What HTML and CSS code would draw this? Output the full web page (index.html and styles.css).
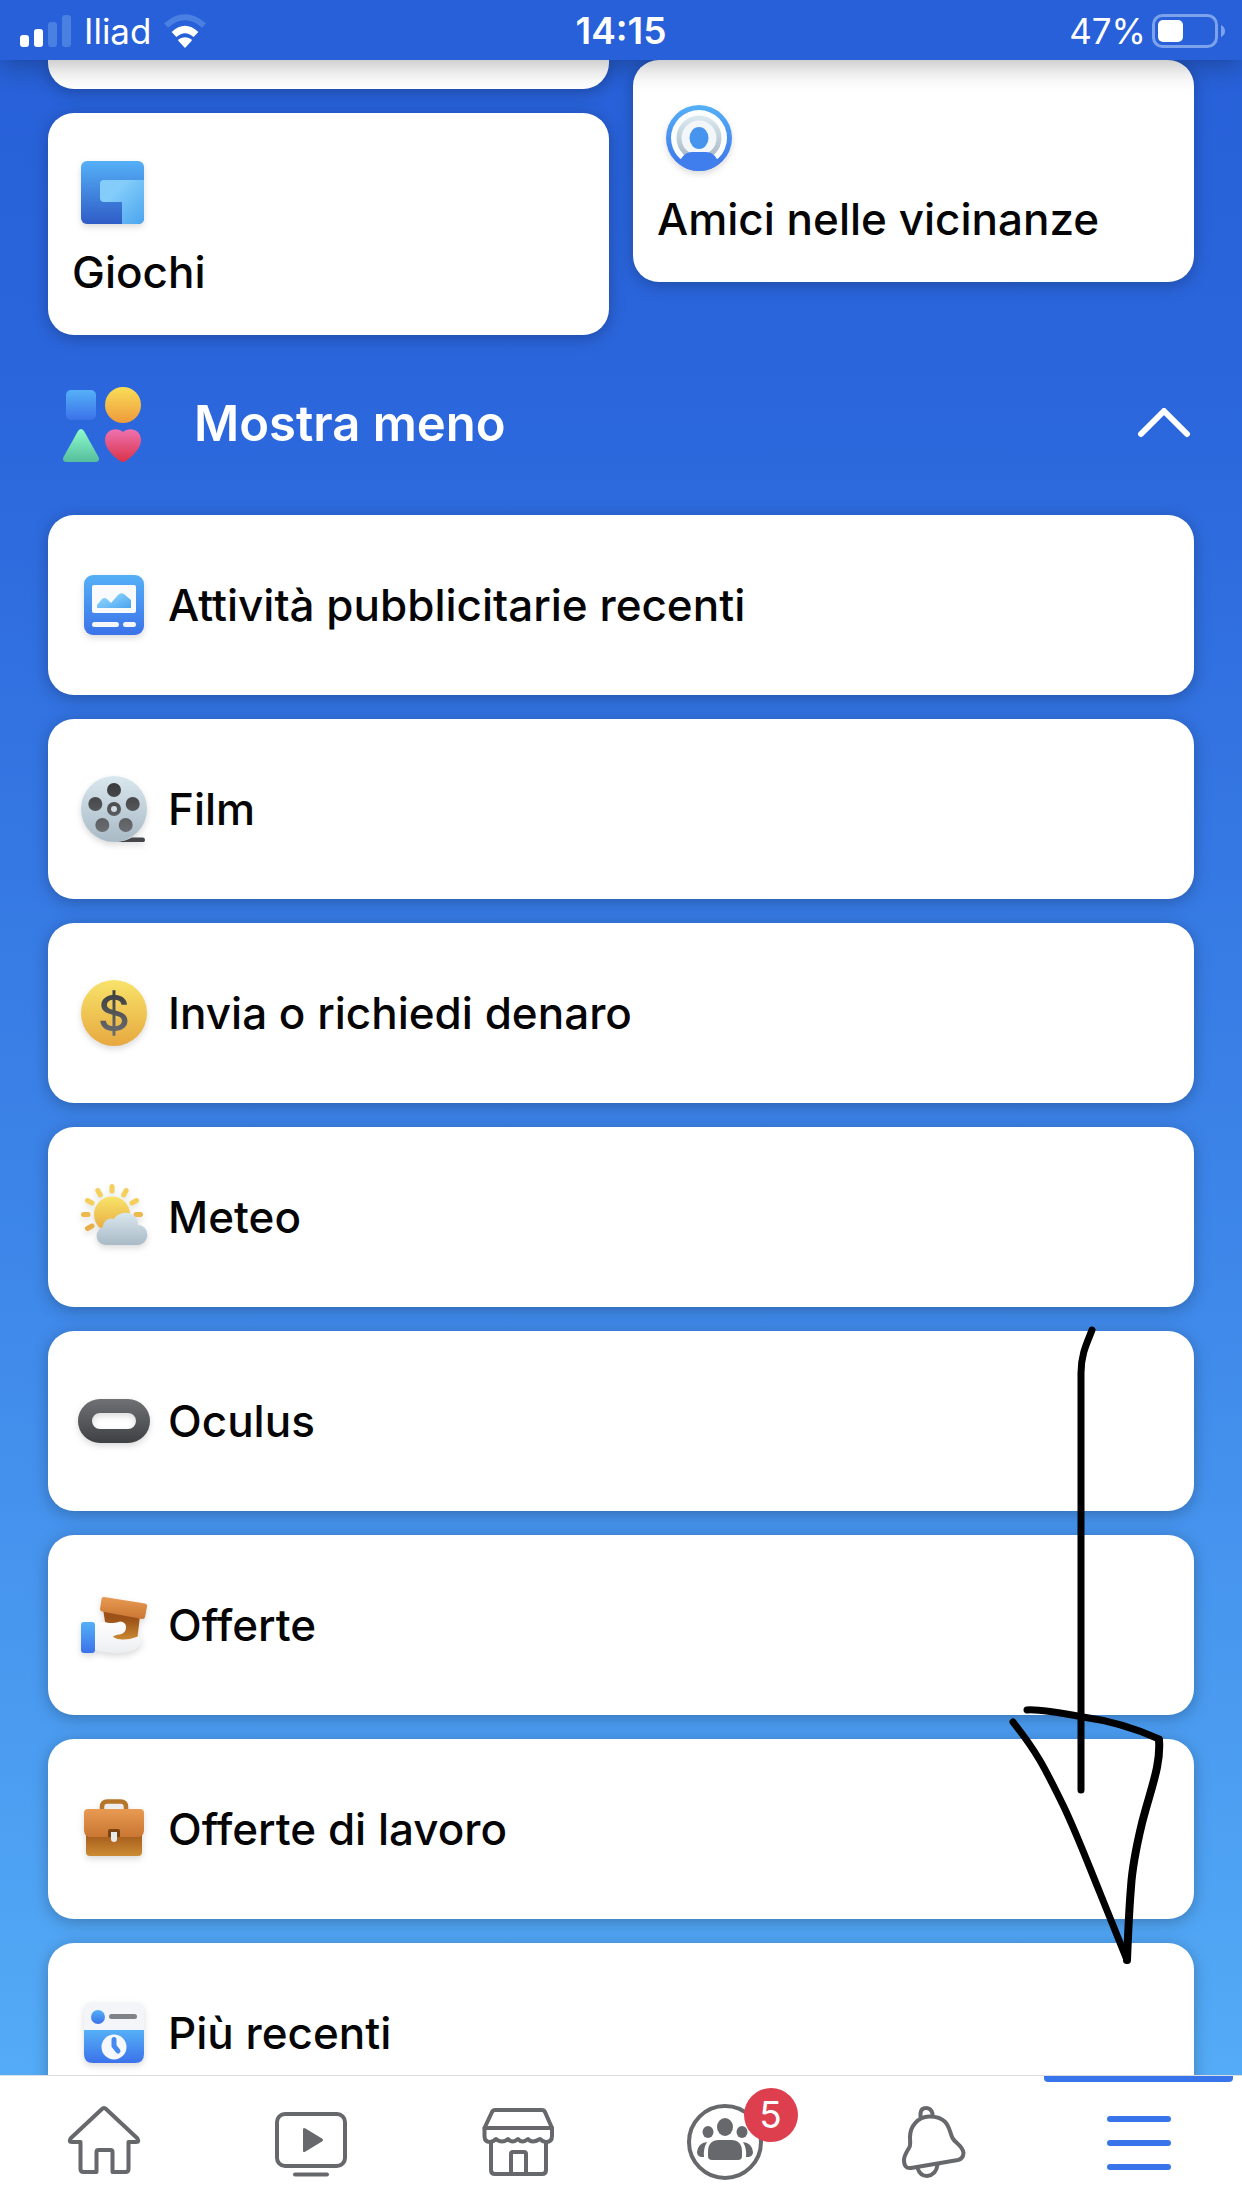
FILE: index.html
```
<!DOCTYPE html>
<html lang="it">
<head>
    <meta charset="UTF-8">
    <meta name="viewport" content="width=device-width, initial-scale=1.0">
    <title>Menu</title>
    <link rel="stylesheet" href="styles.css">
</head>
<body>
    <!-- Shared gradients -->
    <svg class="defs" aria-hidden="true">
        <defs>
            <linearGradient id="blue" x1="0" y1="0" x2="0" y2="1"><stop offset="0" stop-color="#55b0f7"/><stop offset="1" stop-color="#3b72ea"/></linearGradient>
            <linearGradient id="deep" x1="0" y1="0" x2="0" y2="1"><stop offset="0" stop-color="#55b0f7"/><stop offset="1" stop-color="#2f5cc6"/></linearGradient>
            <linearGradient id="sky" x1="0" y1="0" x2="1" y2="1"><stop offset="0.3" stop-color="#84cdfb"/><stop offset="1" stop-color="#4aa4ee"/></linearGradient>
            <linearGradient id="yellow" x1="0" y1="0" x2="0" y2="1"><stop offset="0" stop-color="#f8e36a"/><stop offset="1" stop-color="#e7a83f"/></linearGradient>
            <linearGradient id="orange" x1="0" y1="0" x2="0" y2="1"><stop offset="0" stop-color="#f9de59"/><stop offset="1" stop-color="#ee9a3a"/></linearGradient>
            <linearGradient id="green" x1="0" y1="0" x2="0" y2="1"><stop offset="0" stop-color="#8ffccb"/><stop offset="1" stop-color="#55bd9c"/></linearGradient>
            <linearGradient id="pink" x1="0" y1="0" x2="0" y2="1"><stop offset="0" stop-color="#ee72b0"/><stop offset="1" stop-color="#d93348"/></linearGradient>
            <linearGradient id="silver" x1="0" y1="0" x2="0" y2="1"><stop offset="0" stop-color="#d9e7ee"/><stop offset="1" stop-color="#a9bac6"/></linearGradient>
            <linearGradient id="white" x1="0" y1="0" x2="0" y2="1"><stop offset="0" stop-color="#ffffff"/><stop offset="1" stop-color="#eceef1"/></linearGradient>
            <linearGradient id="grey" x1="0" y1="0" x2="0" y2="1"><stop offset="0" stop-color="#6f7175"/><stop offset="1" stop-color="#3f4043"/></linearGradient>
            <linearGradient id="coal" gradientUnits="userSpaceOnUse" x1="0" y1="10" x2="0" y2="60"><stop offset="0" stop-color="#37393b"/><stop offset="1" stop-color="#6c6e71"/></linearGradient>
            <linearGradient id="tan" x1="0" y1="0" x2="0" y2="1"><stop offset="0" stop-color="#e89a52"/><stop offset="1" stop-color="#c97632"/></linearGradient>
            <linearGradient id="brown" x1="0" y1="0" x2="0" y2="1"><stop offset="0.3" stop-color="#9c5117"/><stop offset="1" stop-color="#cd8c34"/></linearGradient>
        </defs>
    </svg>

    <header class="status">
        <div class="status-left">
            <svg class="signal" viewBox="0 0 56 32" aria-hidden="true">
                <rect x="4" y="20" width="9" height="12" rx="3"/>
                <rect x="18" y="14" width="9" height="18" rx="3"/>
                <rect class="dim" x="32" y="7" width="9" height="25" rx="3"/>
                <rect class="dim" x="46" y="0" width="9" height="32" rx="3"/>
            </svg>
            <span>Iliad</span>
            <svg class="wifi" viewBox="0 0 44 34" aria-hidden="true">
                <path d="M22 34L15.5 27Q14.500 26 16 25Q22 21.500 28 25Q29.500 26 28.500 27Z"/>
                <path d="M11 20.500Q22 10.500 33 20.500" fill="none" stroke="#fff" stroke-width="7"/>
                <path class="dim-line" d="M3 11.500Q22 -5 41 11.500" fill="none" stroke-width="6"/>
            </svg>
        </div>
        <time class="clock">14:15</time>
        <div class="status-right">
            <span>47%</span>
            <svg class="battery" viewBox="0 0 74 34" aria-hidden="true">
                <rect class="battery-case" x="1.500" y="1.500" width="63" height="31" rx="9"/>
                <rect x="6" y="6" width="25" height="22" rx="5"/>
                <path class="dim-nub" d="M69 11Q73 13 73 17T69 23Z"/>
            </svg>
        </div>
    </header>

    <main class="menu">
        <div class="tiles">
            <div class="tile-column">
                <div class="tile-end"></div>
                <a class="card tile" href="#">
                    <svg class="icon" viewBox="0 0 72 72" aria-hidden="true">
                        <rect x="3" y="5" width="63" height="63" rx="6" fill="url(#deep)"/>
                        <path d="M26 24H66V62Q66 68 60 68H44V46H26Q22 46 22 42V28Q22 24 26 24Z" fill="url(#sky)"/>
                    </svg>
                    <span>Giochi</span>
                </a>
            </div>
            <div class="tile-column">
                <a class="card tile" href="#">
                    <svg class="icon" viewBox="0 0 72 72" aria-hidden="true">
                        <circle cx="36" cy="35" r="33" fill="url(#blue)"/>
                        <circle cx="36" cy="35" r="28" fill="#fcfdfe"/>
                        <circle cx="36" cy="35" r="20" fill="#f4f7f9" stroke="url(#silver)" stroke-width="5"/>
                        <ellipse cx="36" cy="35" rx="9.500" ry="11" fill="#4794ef"/>
                        <path d="M18 56Q22 49 29 49H43Q50 49 54 56L57 60Q48 68 36 68T15 60Z" fill="#3f7eec"/>
                    </svg>
                    <span>Amici nelle vicinanze</span>
                </a>
            </div>
        </div>

        <button class="toggle" type="button" aria-expanded="true">
            <svg class="shapes" viewBox="0 0 84 84" aria-hidden="true">
                <rect x="6" y="8" width="30" height="30" rx="5" fill="url(#blue)"/>
                <circle cx="63" cy="23" r="18" fill="url(#orange)"/>
                <path d="M18 49Q21 45 24 49L38.500 75Q40.500 80 35 80H7Q1.500 80 3.500 75Z" fill="url(#green)"/>
                <path d="M63 50C69 44.500 81 47 81 58C81 68 69 77 65 79.500Q63 80.500 61 79.500C57 77 45 68 45 58C45 47 57 44.500 63 50Z" fill="url(#pink)"/>
            </svg>
            <span>Mostra meno</span>
            <svg class="chevron" viewBox="0 0 56 32" aria-hidden="true">
                <path d="M5 26L28 3L51 26"/>
            </svg>
        </button>

        <ul class="list">
            <li><a class="card row" href="#">
                <svg class="icon" viewBox="0 0 72 72" aria-hidden="true">
                    <rect x="6" y="6" width="60" height="60" rx="9" fill="url(#blue)"/>
                    <rect x="14" y="16" width="44" height="28" rx="2" fill="#f9fafc"/>
                    <path d="M19 39V36L24 30Q26.500 28 29 30L33 34L40 26Q43 23 46 25L53 31V39Z" fill="url(#sky)"/>
                    <rect x="14" y="53" width="27" height="5" rx="2.500" fill="#f4f6fa"/>
                    <rect x="45" y="53" width="13" height="5" rx="2.500" fill="#f4f6fa"/>
                </svg>
                <span>Attività pubblicitarie recenti</span>
            </a></li>
            <li><a class="card row" href="#">
                <svg class="icon" viewBox="0 0 72 72" aria-hidden="true">
                    <path d="M38 69Q48 68 54 64.500H65Q67 64.500 67 67T65 69Z" fill="#444649"/>
                    <circle cx="36" cy="36" r="33" fill="url(#silver)"/>
                    <g fill="url(#coal)">
                        <circle cx="36" cy="17" r="7"/>
                        <circle cx="17.300" cy="31" r="7"/>
                        <circle cx="54.700" cy="31" r="7"/>
                        <circle cx="24.300" cy="52" r="7"/>
                        <circle cx="47.700" cy="52" r="7"/>
                        <circle cx="36" cy="36" r="7"/>
                    </g>
                    <circle cx="36" cy="36" r="3" fill="#cfdbe2"/>
                </svg>
                <span>Film</span>
            </a></li>
            <li><a class="card row" href="#">
                <svg class="icon" viewBox="0 0 72 72" aria-hidden="true">
                    <circle cx="36" cy="36" r="33" fill="url(#yellow)"/>
                    <text class="dollar" x="36" y="54" text-anchor="middle">$</text>
                </svg>
                <span>Invia o richiedi denaro</span>
            </a></li>
            <li><a class="card row" href="#">
                <svg class="icon" viewBox="0 0 72 72" aria-hidden="true">
                    <g stroke="#f4cf5c" stroke-width="5" stroke-linecap="round">
                        <path d="M34 5.500V10"/>
                        <path d="M19.800 9.500L22.300 14"/>
                        <path d="M48.200 9.500L45.700 14"/>
                        <path d="M9.500 19.500L14 22"/>
                        <path d="M58.500 19.500L54 22"/>
                        <path d="M5.500 33.500H10" stroke="#ecb94b"/>
                        <path d="M62.500 33.500H58" stroke="#ecb94b"/>
                        <path d="M9.500 47.500L14 45" stroke="#e9ae45"/>
                    </g>
                    <circle cx="34" cy="33.500" r="18" fill="url(#yellow)"/>
                    <path d="M28 64C15 63 17 48 25 46C25 39 32 36 36 38C42 28 60 30 60 44C73 45 72 64 59 64Z" fill="url(#silver)"/>
                </svg>
                <span>Meteo</span>
            </a></li>
            <li><a class="card row" href="#">
                <svg class="icon" viewBox="0 0 72 72" aria-hidden="true">
                    <path fill-rule="evenodd" d="M22 14H50A22 22 0 0 1 50 58H22A22 22 0 0 1 22 14ZM22 28A8 8 0 0 0 22 44H50A8 8 0 0 0 50 28Z" fill="url(#grey)"/>
                </svg>
                <span>Oculus</span>
            </a></li>
            <li><a class="card row" href="#">
                <svg class="icon" viewBox="0 0 72 72" aria-hidden="true">
                    <path d="M25 20L62 27L59 52H30Z" fill="url(#brown)"/>
                    <path d="M26 8L67 14.500Q69.500 15 69 17.500L67 28Q66.500 30.500 64 30L24 22.500Q22 22 22 20L23.500 10Q24 7.500 26 8Z" fill="url(#tan)"/>
                    <path d="M17 34Q24 32 31 34Q38 34 42 32.500Q48 33 48 38Q48 44 42 45.500Q36 46 35 48Q40 51 46 50.500Q54 50 60 47.500Q64 47 64 52Q62 60 50 63Q34 66 17 61Z" fill="url(#white)"/>
                    <rect x="3" y="33" width="14" height="31" rx="3" fill="url(#blue)"/>
                </svg>
                <span>Offerte</span>
            </a></li>
            <li><a class="card row" href="#">
                <svg class="icon" viewBox="0 0 72 72" aria-hidden="true">
                    <path d="M24 18V14Q24 8.500 29.500 8.500H42.500Q48 8.500 48 14V18" fill="none" stroke="#b6762a" stroke-width="4.500"/>
                    <rect x="8" y="26" width="56" height="37" rx="4" fill="url(#brown)"/>
                    <path d="M10 16H62Q66 16 66 20V38Q65 44 60 44H12Q7 44 6 38V20Q6 16 10 16Z" fill="url(#tan)"/>
                    <path d="M30 44V38Q30 36 32 36H40Q42 36 42 38V44Z" fill="#7c4315"/>
                    <path d="M33 39H39V46Q39 49 36 49T33 46Z" fill="#e8e9eb"/>
                </svg>
                <span>Offerte di lavoro</span>
            </a></li>
            <li><a class="card row" href="#">
                <svg class="icon" viewBox="0 0 72 72" aria-hidden="true">
                    <path d="M6 33V14Q6 5 15 5H57Q66 5 66 14V33Z" fill="#f4f5f8"/>
                    <path d="M6 33H66V57Q66 66 57 66H15Q6 66 6 57Z" fill="url(#blue)"/>
                    <circle cx="20" cy="20" r="7" fill="url(#blue)"/>
                    <rect x="31" y="17" width="28" height="5" rx="2.500" fill="#808289"/>
                    <circle cx="36" cy="50" r="12.500" fill="#f6f8fc"/>
                    <path d="M36 42.500V49L40 54" fill="none" stroke="#458af0" stroke-width="5" stroke-linecap="round" stroke-linejoin="round"/>
                </svg>
                <span>Più recenti</span>
            </a></li>
        </ul>
    </main>

    <nav class="tabs">
        <a class="tab" href="#" aria-label="Home">
            <svg viewBox="0 0 80 80" aria-hidden="true">
                <path d="M38 7Q40 5 42 7L73 36Q76 40 72 40H64.500V67Q64.500 70 61.500 70H48.500V50Q48.500 48 46.500 48H34.500Q32.500 48 32.500 50V70H19.500Q16.500 70 16.500 67V40H8Q4 40 7 36Z"/>
            </svg>
        </a>
        <a class="tab" href="#" aria-label="Watch">
            <svg viewBox="0 0 80 80" aria-hidden="true">
                <rect x="6" y="12" width="68" height="52" rx="8"/>
                <path d="M24 72.500H56"/>
                <path class="solid" d="M32 27.500Q32 25 34.500 26.500L51 36.500Q53 38 51 39.500L34.500 49.500Q32 51 32 48.500Z"/>
            </svg>
        </a>
        <a class="tab" href="#" aria-label="Marketplace">
            <svg viewBox="0 0 80 80" aria-hidden="true">
                <path d="M6.500 26L14 10Q15 8 17 8H64Q66 8 67 10L74 26V34Q74 40 68 40Q65 40 62 37Q54 42 50 37Q44 42 40 37Q34 42 30 37Q24 42 18 37Q15 40 12 40Q6.500 40 6.500 34Z"/>
                <path d="M6.500 26H74"/>
                <path d="M13 40V68Q13 72 17 72H64Q68 72 68 68V40"/>
                <path d="M33 72V52Q33 50 35 50H46Q48 50 48 52V72"/>
            </svg>
        </a>
        <a class="tab" href="#" aria-label="Gruppi">
            <svg viewBox="0 0 80 80" aria-hidden="true">
                <circle cx="40" cy="40" r="36"/>
                <g class="solid">
                    <ellipse cx="40" cy="25" rx="8" ry="9"/>
                    <ellipse cx="23" cy="30" rx="5.500" ry="6"/>
                    <ellipse cx="57" cy="30" rx="5.500" ry="6"/>
                    <path d="M23 50Q23 38 34 38H46Q57 38 57 50V54Q57 58 53 58H27Q23 58 23 54Z"/>
                    <path d="M22 40Q18 47 19 55H16Q12 54 12 50Q13 41 22 40Z"/>
                    <path d="M58 40Q62 47 61 55H64Q68 54 68 50Q67 41 58 40Z"/>
                </g>
            </svg>
            <span class="badge">5</span>
        </a>
        <a class="tab" href="#" aria-label="Notifiche">
            <svg viewBox="0 0 80 80" aria-hidden="true">
                <path d="M28.500 15V11.500Q29 6 34 6Q39 6 40.500 11.500V14"/>
                <path d="M37 14.500C26 15 18 24 18 35C18 40 19 43 17 46C14 51 12 54 12 58Q12 67 19 66L66 58Q71 57 71.500 51C71 44 63 41 60.500 36C57 30 58 14 37 14.500Z"/>
                <path d="M25.500 66Q28 74 35 74Q44 73 45.500 63"/>
            </svg>
        </a>
        <a class="tab active" href="#" aria-label="Menu" aria-current="page">
            <svg viewBox="0 0 80 80" aria-hidden="true">
                <path d="M11 17H69M11 41H69M11 65H69"/>
            </svg>
        </a>
    </nav>

    <!-- Hand-drawn arrow over the list -->
    <svg class="arrow" viewBox="0 0 180 660" aria-hidden="true">
        <path d="M91 15C87 26 80 38 80 58V475"/>
        <path d="M26 395C36 394 60 398 82 402C112 406 138 415 158 424"/>
        <path class="thick" d="M158 425C160 450 150 473 141 508C135 533 131 556 130 572C128 596 127 620 126 645"/>
        <path d="M126 645L99 578C86 546 75 517 62 490C46 458 39 441 12 407"/>
    </svg>
</body>
</html>
```
FILE: styles.css
```
* {
    box-sizing: border-box;
}

body {
    margin: 0;
    height: 100vh;
    display: flex;
    flex-direction: column;
    position: relative; /* Required for the arrow overlay */
    overflow: hidden;
    background: linear-gradient(#2760d8, #2b66dc 18%, #3f89ea 59%, #54abf6 94%);
    color: #050505;
    font-family: Inter, Roboto, "Liberation Sans", sans-serif;
    font-size: 44px;
    font-weight: 500;
    line-height: 56px;
}

a {
    color: inherit;
    text-decoration: none;
}

.defs {
    position: absolute;
    width: 0;
    height: 0;
}

/* Status bar */
.status {
    flex: none;
    display: grid;
    grid-template-columns: 1fr auto 1fr;
    align-items: center;
    height: 60px;
    padding: 2px 16px 0;
    background: #2760d8;
    color: #fff;
    font-size: 35px;
    font-weight: 400;
    box-shadow: 0 4px 28px rgba(0, 0, 0, 0.3);
    position: relative;
    z-index: 1; /* Shadow falls on the cards */
}

.status svg {
    fill: #fff;
}

.status-left,
.status-right {
    display: flex;
    align-items: center;
}

.status-left {
    gap: 12px;
}

.status-right {
    justify-content: flex-end;
    gap: 6px;
}

.clock {
    font-size: 37px;
    font-weight: 600;
}

.signal {
    width: 56px;
    height: 32px;
}

.wifi {
    width: 44px;
    height: 34px;
}

.battery {
    width: 74px;
    height: 34px;
}

.status .dim {
    fill: #4a80e2;
}

.dim-line {
    stroke: #4a80e2;
}

.status .dim-nub {
    fill: #7ba2ea;
}

.status .battery-case {
    fill: none;
    stroke: #7ba2ea;
    stroke-width: 3;
}

/* Cards */
.menu {
    flex: 1;
    min-height: 0;
    overflow: hidden;
    padding: 0 48px;
}

.card {
    display: flex;
    background: #fff;
    border-radius: 26px;
    box-shadow: 0 3px 16px rgba(0, 0, 0, 0.26);
}

.icon {
    flex: none;
    width: 72px;
    height: 72px;
    overflow: visible;
    filter: drop-shadow(0 3px 3px rgba(0, 0, 0, 0.14));
}

.dollar {
    font-size: 50px;
    font-weight: 500;
    fill: url(#coal);
}

.tiles {
    display: flex;
    align-items: flex-start;
    gap: 24px;
}

.tile-column {
    flex: 1;
    display: flex;
    flex-direction: column;
    gap: 24px;
}

/* Bottom edge of the tile that is scrolled away */
.tile-end {
    height: 29px;
    background: #fff;
    border-radius: 0 0 26px 26px;
    box-shadow: 0 3px 16px rgba(0, 0, 0, 0.26);
}

.tile {
    flex-direction: column;
    gap: 16px;
    padding: 43px 24px 35px;
}

.tile .icon {
    margin-left: 6px;
}

.toggle {
    display: flex;
    align-items: center;
    width: 100%;
    height: 180px;
    padding: 0 2px 2px 12px;
    border: 0;
    background: none;
    color: #fff;
    font: inherit;
    font-size: 49px;
    font-weight: 600;
    text-align: left;
}

.toggle span {
    flex: 1;
    margin-left: 50px;
}

.shapes {
    width: 84px;
    height: 84px;
}

.chevron {
    width: 56px;
    height: 32px;
    fill: none;
    stroke: #fff;
    stroke-width: 6;
    stroke-linecap: round;
    stroke-linejoin: round;
}

.list {
    list-style: none;
    margin: 0;
    padding: 0;
    display: flex;
    flex-direction: column;
    gap: 24px;
}

.row {
    align-items: center;
    gap: 18px;
    height: 180px;
    padding: 0 30px;
}

/* Bottom tabs */
.tabs {
    flex: none;
    display: flex;
    height: 133px;
    background: #fff;
    border-top: 1px solid #dddee1;
    position: relative;
}

.tab {
    flex: 1;
    display: flex;
    align-items: center;
    justify-content: center;
    position: relative;
}

.tab svg {
    width: 80px;
    height: 80px;
    fill: none;
    stroke: #67686c;
    stroke-width: 4;
    stroke-linecap: round;
    stroke-linejoin: round;
}

.tab .solid {
    fill: #67686c;
    stroke: none;
}

.tab.active svg {
    stroke: #3975ea;
    stroke-width: 6;
}

.tab.active::before {
    content: "";
    position: absolute;
    top: 0;
    left: 9px;
    right: 9px;
    height: 6px;
    border-radius: 0 0 4px 4px;
    background: #3975ea;
}

.badge {
    position: absolute;
    top: 12px;
    left: calc(50% + 19px);
    width: 54px;
    height: 54px;
    border-radius: 50%;
    background: #dd3f4f;
    color: #fff;
    font-size: 37px;
    font-weight: 400;
    line-height: 54px;
    text-align: center;
}

.arrow {
    position: absolute;
    top: 1315px;
    right: 61px;
    width: 180px;
    height: 660px;
    fill: none;
    stroke: #000;
    stroke-width: 7;
    stroke-linecap: round;
    stroke-linejoin: round;
    pointer-events: none;
}

.arrow .thick {
    stroke-width: 8;
}
```
